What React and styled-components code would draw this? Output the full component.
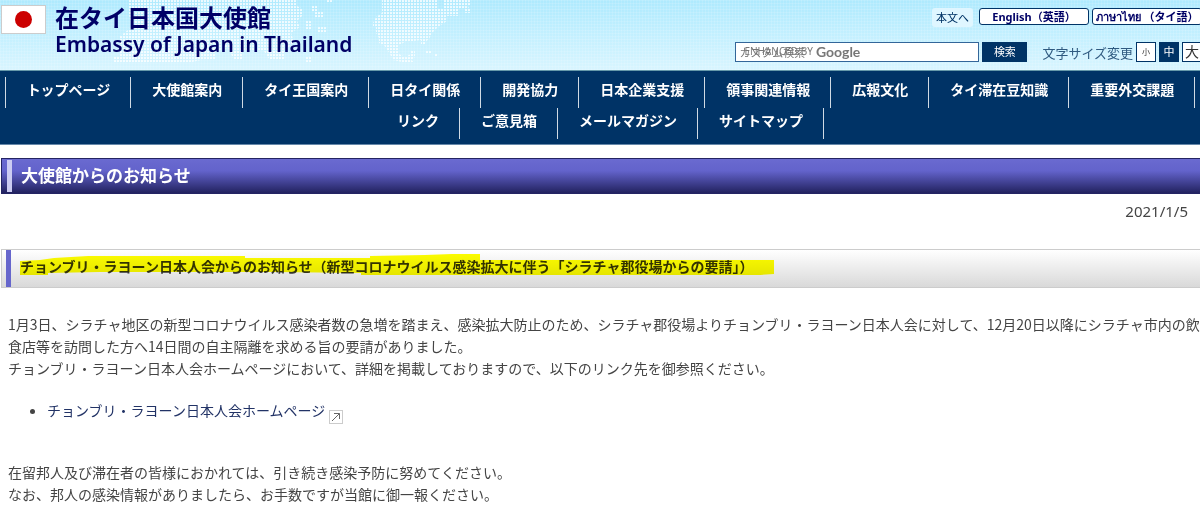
import React from 'react';
import styled, { createGlobalStyle } from 'styled-components';

const GlobalStyle = createGlobalStyle`
    * {
        box-sizing: border-box;
    }

    body {
        margin: 0;
        background: #fff;
        color: #444;
        font: 14px/22px "Noto Sans", "Noto Sans CJK JP", sans-serif;
    }

    a {
        color: inherit;
        text-decoration: none;
    }

    button,
    input {
        font-family: inherit;
        margin: 0;
    }
`;

const Header = styled.header`
    position: relative;
    display: flex;
    justify-content: space-between;
    min-height: 70px;
    overflow: hidden;
    background-color: #bdeeff;
    background-image:
        repeating-linear-gradient(90deg, rgba(255, 255, 255, .12) 0 1px, transparent 1px 3px),
        repeating-linear-gradient(rgba(255, 255, 255, .12) 0 1px, transparent 1px 3px),
        linear-gradient(#aeeafe, #d8f5ff);
`;

const WorldMap = styled.svg`
    position: absolute;
    top: 0;
    left: 0;
`;

const Brand = styled.a`
    position: relative;
    display: flex;
    gap: 9px;
    padding: 5px 0 0 1px;
    color: #000066;
`;

const Flag = styled.svg`
    flex: none;
`;

const SiteName = styled.h1`
    margin: 0;
    font-size: 24px;
    font-weight: 700;
    line-height: 26px;
`;

const SiteNameEn = styled.span`
    display: block;
    font-size: 21px;
    font-weight: 600;
`;

const Tools = styled.div`
    position: relative;
    flex: none;
    display: flex;
    flex-direction: column;
    gap: 15px;
    margin-right: -2px;
    padding-top: 8px;
`;

const ToolRow = styled.div`
    display: flex;
    justify-content: flex-end;
    align-items: flex-start;
    gap: 3px;
`;

const SkipLink = styled.a`
    margin-right: 3px;
    padding: 0 4px;
    border-radius: 3px;
    background: #dff6ff;
    color: #003366;
    font-size: 11px;
    line-height: 19px;
`;

const LangLink = styled.a`
    width: 110px;
    border: 1px solid #003366;
    border-radius: 3px;
    background: #fff;
    color: #000066;
    font-size: 11px;
    font-weight: 700;
    line-height: 15px;
    text-align: center;
    white-space: nowrap;
`;

const SearchForm = styled.form`
    display: flex;
    gap: 3px;
    margin-right: 12px;
`;

const SearchBox = styled.div`
    position: relative;
`;

const SearchInput = styled.input`
    display: block;
    width: 244px;
    height: 20px;
    padding: 0 3px;
    border: 1px solid #336699;
    font-size: 11px;

    &::placeholder {
        color: #757575;
        opacity: 1;
    }
`;

const Watermark = styled.span`
    position: absolute;
    top: 0;
    left: 9px;
    display: flex;
    gap: 3px;
    color: #777;
    font-size: 10px;
    line-height: 19px;
    pointer-events: none;

    b {
        font-family: Lato, sans-serif;
        font-size: 14px;
        font-weight: 700;
    }
`;

const SearchButton = styled.button`
    width: 45px;
    height: 20px;
    padding: 0;
    border: 1px solid #003366;
    background: #003366;
    color: #fff;
    font-size: 11px;
    line-height: 16px;
`;

const SizeLabel = styled.span`
    color: #2f5a80;
    font-size: 13px;
    line-height: 22px;
`;

const SizeButton = styled.button`
    width: 20px;
    height: 20px;
    padding: 0;
    border: 1px solid #003366;
    background: ${ ({ $active }) => $active ? '#003366' : '#fff' };
    color: ${ ({ $active }) => $active ? '#fff' : '#333' };
    font-size: ${ ({ $size }) => $size }px;
    line-height: 16px;
`;

const Nav = styled.nav`
    padding: 6px 0 5px;
    border-top: 1px solid #6699aa;
    border-bottom: 1px solid #6688aa;
    background: #003366;
`;

const NavList = styled.ul`
    display: flex;
    flex-wrap: wrap;
    justify-content: center;
    margin: 0;
    padding: 0;
    list-style: none;
`;

const NavItem = styled.li`
    border-right: 1px solid #d0dae4;

    &:first-child {
        border-left: 1px solid #d0dae4;
    }
`;

const NavLink = styled.a`
    display: block;
    padding: 0 20px 5px 21px;
    color: #fff;
    font-weight: 700;
    line-height: 26px;
`;

const PageTitle = styled.h2`
    display: flex;
    margin: 13px 0 0 1px;
    padding: 1px 0 1px 5px;
    border: solid #242463;
    border-width: 1px 0 1px 1px;
    background: linear-gradient(#6a6ad0, #6363cb 35%, #22225f);
    color: #fff;
    font-size: 17px;
    font-weight: 700;
    line-height: 32px;

    &::before {
        content: "";
        width: 5px;
        margin-right: 9px;
        background: #ccccf2;
    }
`;

const PostDate = styled.p`
    margin: 6px 12px 27px;
    font-size: 15px;
    text-align: right;
`;

const PostTitle = styled.h3`
    display: flex;
    min-height: 39px;
    margin: 0 0 0 1px;
    border: 1px solid #ccc;
    border-right: 0;
    background: linear-gradient(#fff, #d9d9d9);
    color: #333;
    font-size: 14px;
    font-weight: 700;
    line-height: 34px;

    &::before {
        content: "";
        width: 5px;
        margin: 0 9px 0 4px;
        background: #6666cc;
    }
`;

const Marked = styled.span`
    position: relative;
`;

const Marker = styled.svg`
    position: absolute;
    top: 3px;
    left: 0;
    mix-blend-mode: multiply;
`;

const Article = styled.div`
    padding: 25px 0 12px 8px;
    font-family: "Noto Sans CJK JP", sans-serif;

    p {
        margin: 0;
    }
`;

const LinkList = styled.ul`
    margin: 20px 0 37px;
    padding-left: 39px;

    a {
        color: #223366;
    }

    svg {
        margin-left: 4px;
        vertical-align: -8px;
    }
`;

const navItems = [
    'トップページ', '大使館案内', 'タイ王国案内', '日タイ関係', '開発協力',
    '日本企業支援', '領事関連情報', '広報文化', 'タイ滞在豆知識', '重要外交課題',
    'リンク', 'ご意見箱', 'メールマガジン', 'サイトマップ',
];

const sizes = [
    { label: '小', size: 8 },
    { label: '中', size: 11, active: true },
    { label: '大', size: 14 },
];

const DottedMap = () => (
    <WorldMap width="480" height="70" aria-hidden="true">
        <defs>
            <pattern id="dots" width="3" height="3" patternUnits="userSpaceOnUse">
                <rect width="2" height="2" rx=".5" fill="#fff" fillOpacity=".8" />
            </pattern>
        </defs>
        <g fill="url(#dots)">
            <path d="M129 0H297V6L303 9V15L297 21L300 27L291 33L294 42L285 51V60H270L264 51H243V60H234L228 48L216 51V60H201L192 62H114V57H120V36L132 27L129 15Z" />
            <path d="M312 6H318V12H324V18H315V12H312ZM306 21H312V30H306ZM318 27H327V33H318ZM327 0H333V3H327ZM306 57H312V62H306Z" />
            <path d="M382 0H438V9H444V0H471V5H465L471 9V13H465V8H459V16H447V21L438 27L432 33L429 39L425 42V45H421V40L405 42L399 45V54L405 57L411 54V50H415V57L411 60L414 62H402L393 60L390 54L384 45L379 43V38L376 33V27H373V23L376 17L382 13Z" />
            <path d="M426 51H432V54H426ZM435 54H438V57H435Z" />
        </g>
    </WorldMap>
);

const App = () => {
    return (
        <>
            <GlobalStyle />
            <Header>
                <DottedMap />
                <Brand href="#">
                    <Flag width="45" height="29" aria-hidden="true">
                        <rect x=".5" y=".5" width="44" height="28" fill="#fff" stroke="#ccc" />
                        <circle cx="22.5" cy="14.5" r="8.5" fill="#cc0000" />
                    </Flag>
                    <SiteName>
                        在タイ日本国大使館
                        <SiteNameEn>Embassy of Japan in Thailand</SiteNameEn>
                    </SiteName>
                </Brand>
                <Tools>
                    <ToolRow>
                        <SkipLink href="#main">本文へ</SkipLink>
                        <LangLink href="#en">English（英語）</LangLink>
                        <LangLink href="#th">ภาษาไทย （タイ語）</LangLink>
                    </ToolRow>
                    <ToolRow>
                        <SearchForm>
                            <SearchBox>
                                <SearchInput type="text" aria-label="検索" placeholder="カスタム検索" />
                                <Watermark>ENHANCED BY <b>Google</b></Watermark>
                            </SearchBox>
                            <SearchButton type="button">検索</SearchButton>
                        </SearchForm>
                        <SizeLabel>文字サイズ変更</SizeLabel>
                        { sizes.map(({ label, size, active }) => (
                            <SizeButton key={ label } type="button" $size={ size } $active={ active }>
                                { label }
                            </SizeButton>
                        )) }
                    </ToolRow>
                </Tools>
            </Header>
            <Nav>
                <NavList>
                    { navItems.map(item => (
                        <NavItem key={ item }>
                            <NavLink href="#">{ item }</NavLink>
                        </NavItem>
                    )) }
                </NavList>
            </Nav>
            <main id="main">
                <PageTitle>大使館からのお知らせ</PageTitle>
                <PostDate>2021/1/5</PostDate>
                <PostTitle>
                    <Marked>
                        チョンブリ・ラヨーン日本人会からのお知らせ（新型コロナウイルス感染拡大に伴う「シラチャ郡役場からの要請」）
                        <Marker width="754" height="24" aria-hidden="true">
                            <path d="M0 8L20 7L34 5L68 3H225V5H350V3L405 2L432 1H460V7H754V21L740 22H341V20L255 19H80L28 20V22H0Z" fill="#ffff00" />
                        </Marker>
                    </Marked>
                </PostTitle>
                <Article>
                    <p>
                        1月3日、シラチャ地区の新型コロナウイルス感染者数の急増を踏まえ、感染拡大防止のため、シラチャ郡役場よりチョンブリ・ラヨーン日本人会に対して、12月20日以降にシラチャ市内の飲食店等を訪問した方へ14日間の自主隔離を求める旨の要請がありました。
                    </p>
                    <p>
                        チョンブリ・ラヨーン日本人会ホームページにおいて、詳細を掲載しておりますので、以下のリンク先を御参照ください。
                    </p>
                    <LinkList>
                        <li>
                            <a href="#jat">
                                チョンブリ・ラヨーン日本人会ホームページ
                                <svg width="14" height="14" aria-hidden="true">
                                    <rect x=".5" y=".5" width="13" height="13" fill="#fff" stroke="#ccc" />
                                    <path d="M3 11L10.500 3.500M5 3.500H10.500V9" fill="none" stroke="#666" />
                                </svg>
                            </a>
                        </li>
                    </LinkList>
                    <p>在留邦人及び滞在者の皆様におかれては、引き続き感染予防に努めてください。</p>
                    <p>なお、邦人の感染情報がありましたら、お手数ですが当館に御一報ください。</p>
                </Article>
            </main>
        </>
    );
};

export default App;
